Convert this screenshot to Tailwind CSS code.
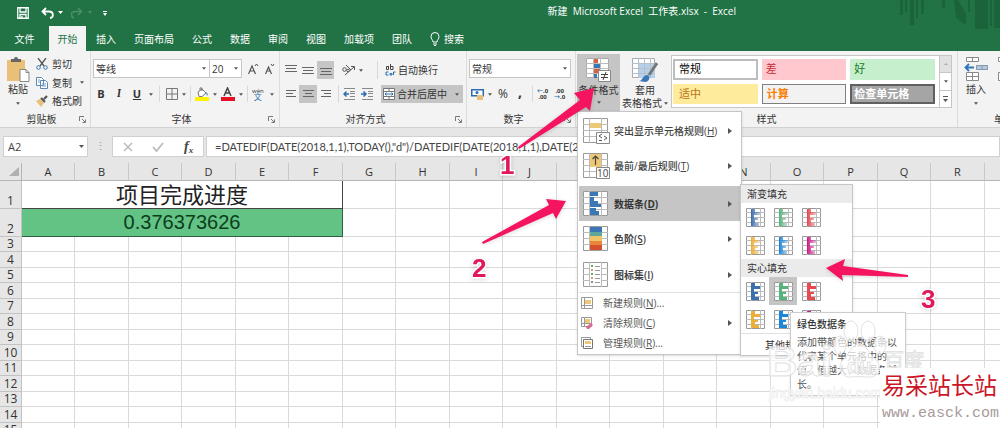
<!DOCTYPE html>
<html lang="zh-CN">
<head>
    <meta charset="UTF-8">
    <meta name="viewport" content="width=device-width, initial-scale=1.0">
    <title>新建 Microsoft Excel 工作表.xlsx - Excel</title>
    <script src="https://cdn.jsdelivr.net/npm/@tailwindcss/browser@4"></script>
</head>
<body class="relative min-h-screen overflow-hidden bg-white font-['Open_Sans','Noto_Sans_CJK_SC',sans-serif] text-[10px] leading-[14px] text-[#333]">

    <!-- Shared glyphs -->
    <svg class="hidden">
        <symbol id="caret" viewBox="0 0 5 3"><path d="M0 0h5L2.500 3z" fill="#555"/></symbol>
        <symbol id="launcher" viewBox="0 0 7 7"><path d="M.5 5V.5H5M3 3l3 3M6.500 3.500v3h-3" fill="none" stroke="#777"/></symbol>
        <symbol id="arrow" viewBox="0 0 4 6"><path d="M0 0l4 3-4 3z" fill="#555"/></symbol>
        <symbol id="sheet" viewBox="0 0 25 25"><path d="M.5.5h24v24H.5z" fill="#fff" stroke="#999"/><path d="M6.500 0v25M18.500 0v25M0 6.500h25M0 12.500h25M0 18.500h25" fill="none" stroke="#bbb"/></symbol>
    </svg>

    <!-- Title bar and tabs -->
    <header class="relative bg-[#217346] text-white">
        <svg class="absolute right-0 top-0 h-8 w-[104px]" viewBox="0 0 104 32" fill="#1b633b">
            <path d="M4 0h3v15H4zM9 0h2v12H9zM14 0h4v25h-4zM20 0h2v18h-2zM25 0h3v14h-3zM46 0h3v8h-3zM58 0h4l8 14v11L60 18zM72 0h2v12h-2zM79 0h13v29H79zM94 0h2v26h-2zM98 0h6v28h-6z"/>
        </svg>
        <div class="flex h-[26px] items-center">
            <div class="flex flex-1 items-center pl-[17px]">
                <button aria-label="保存"><svg class="h-3 w-3" viewBox="0 0 12 12"><path d="M.75.75h10.500v10.500H.75zM3 1v4h6V1M3 11V7.500h6V11M5 9v2" fill="none" stroke="#fff" stroke-width="1.300"/></svg></button>
                <button aria-label="撤消" class="ml-3"><svg class="h-3 w-[22px]" viewBox="0 0 22 12"><path d="M5 1L1.500 4.500 5 8M2 4.500h6c5 0 5 6 1 6.500" fill="none" stroke="#fff" stroke-width="1.800"/><path d="M17 4h5l-2.500 3z" fill="#fff"/></svg></button>
                <button aria-label="恢复" class="ml-2"><svg class="h-3 w-[22px]" viewBox="0 0 22 12"><path d="M7 1l3.500 3.500L7 8M10 4.500H4C-1 4.500 0 10.500 3 11" fill="none" stroke="#4b8f6a" stroke-width="1.600"/><path d="M17 4h4l-2 3z" fill="#4b8f6a"/></svg></button>
                <button aria-label="自定义快速访问工具栏" class="ml-2.5"><svg class="h-[5px] w-1" viewBox="0 0 4 5"><path d="M0 0h4v1H0zM0 2h4L2 5z" fill="#fff"/></svg></button>
            </div>
            <h1 class="mr-[264px] whitespace-pre pb-1 text-[10px]">新建  Microsoft Excel  工作表.xlsx  -  Excel</h1>
        </div>
        <nav class="flex h-[25px] items-stretch">
            <a href="#" class="flex w-[49px] items-center justify-center">文件</a>
            <a href="#" class="flex w-[37px] items-center justify-center bg-[#f3f3f3] text-[#217346]">开始</a>
            <a href="#" class="flex w-10 items-center justify-center">插入</a>
            <a href="#" class="flex w-14 items-center justify-center">页面布局</a>
            <a href="#" class="flex w-10 items-center justify-center">公式</a>
            <a href="#" class="flex w-9 items-center justify-center">数据</a>
            <a href="#" class="flex w-10 items-center justify-center">审阅</a>
            <a href="#" class="flex w-9 items-center justify-center">视图</a>
            <a href="#" class="flex w-[50px] items-center justify-center">加载项</a>
            <a href="#" class="flex w-9 items-center justify-center">团队</a>
            <a href="#" class="ml-2.5 flex items-center gap-1">
                <svg class="h-[14px] w-[10px]" viewBox="0 0 10 14" fill="none" stroke="#fff"><path d="M3 10C3 8 1 7 1 4.500a4 4 0 018 0C9 7 7 8 7 10zM3 12h4M4 13.500h2"/></svg>搜索
            </a>
        </nav>
    </header>

    <!-- Ribbon -->
    <section class="flex h-[77px] border-b border-[#d2d2d2] bg-[#f3f3f3]">
        <!-- Clipboard -->
        <div class="flex w-[91px] shrink-0 flex-col border-r border-[#dcdcdc]">
            <div class="flex flex-1 pl-1 pt-1.5">
                <button class="flex w-7 flex-col items-center">
                    <svg class="h-[25px] w-6" viewBox="0 0 24 25"><path d="M1 3h18v21H1z" fill="#eabf77"/><path d="M5 5V2h3a2 2 0 014 0h3v3z" fill="#666"/><path d="M14 12.500h6l3 3v9h-9z" fill="#fff" stroke="#888"/><path d="M20 12.500v3h3" fill="none" stroke="#888"/></svg>
                    <span>粘贴</span>
                    <svg class="mt-1.5 h-[3px] w-1"><use href="#caret"/></svg>
                </button>
                <div class="ml-1 flex flex-col gap-1">
                    <button class="flex h-[14px] items-center gap-1">
                        <svg class="h-3 w-3" viewBox="0 0 12 12" fill="none"><path d="M2 0l6 8M10 0L4 8" stroke="#555" stroke-width="1.300"/><circle cx="2.500" cy="9.500" r="1.800" stroke="#3b76b5"/><circle cx="9.500" cy="9.500" r="1.800" stroke="#3b76b5"/></svg>剪切
                    </button>
                    <button class="flex h-[15px] items-center gap-1">
                        <svg class="h-3 w-3" viewBox="0 0 12 12"><path d="M.5.5h5l2 2v6h-7zM4.500 3.500h5l2 2v6h-7z" fill="#fff" stroke="#5d88b3"/><path d="M6 7h4M6 9h4M2 3h2M2 5h2" stroke="#7ba3cb"/></svg>复制
                        <svg class="ml-1 h-[3px] w-1"><use href="#caret"/></svg>
                    </button>
                    <button class="flex h-[14px] items-center gap-1">
                        <svg class="h-3 w-3" viewBox="0 0 12 12"><path d="M0 6l4-2 4 4-3 4z" fill="#eabf77"/><path d="M5 3l4 4M8 4l3-3" stroke="#555" stroke-width="2.200"/></svg>格式刷
                    </button>
                </div>
            </div>
            <div class="flex h-4 items-center px-1"><span class="flex-1 text-center">剪贴板</span><svg class="h-[7px] w-[7px]"><use href="#launcher"/></svg></div>
        </div>

        <!-- Font -->
        <div class="flex w-[189px] shrink-0 flex-col border-r border-[#dcdcdc]">
            <div class="flex flex-1 flex-col gap-2 pl-0.5 pt-2">
                <div class="flex items-center">
                    <div class="relative"><select aria-label="字体" class="h-[19px] w-[117px] appearance-none border border-[#c6c6c6] bg-white pl-0.5"><option>等线</option></select><svg class="absolute right-1 top-2 h-[3px] w-1"><use href="#caret"/></svg></div>
                    <div class="relative"><select aria-label="字号" class="h-[19px] w-8 appearance-none border border-l-0 border-[#c6c6c6] bg-white pl-0.5"><option>20</option></select><svg class="absolute right-1 top-2 h-[3px] w-1"><use href="#caret"/></svg></div>
                    <button aria-label="增大字号" class="ml-1.5"><svg class="h-3 w-[11px]" viewBox="0 0 11 12" fill="none" stroke="#555"><path d="M.5 11L4 3l3.500 8M2 8h4" stroke-width="1.200"/><path d="M7 3l1.500-2L10 3"/></svg></button>
                    <button aria-label="减小字号" class="ml-1.5"><svg class="h-3 w-[10px]" viewBox="0 0 10 12" fill="none" stroke="#555"><path d="M.5 11l3-7 3 7M2 8h3" stroke-width="1.200"/><path d="M6 1l1.500 2L9 1"/></svg></button>
                </div>
                <div class="flex h-4 items-center">
                    <button class="w-4 text-[11px] font-bold">B</button>
                    <button class="w-5 font-serif text-[11px] font-bold italic">I</button>
                    <button class="w-4 text-[11px] font-bold underline">U</button>
                    <svg class="ml-1 h-[3px] w-1"><use href="#caret"/></svg>
                    <span class="mx-1.5 h-4 border-l border-[#d8d8d8]"></span>
                    <button aria-label="边框"><svg class="h-3 w-3" viewBox="0 0 12 12"><path d="M.5.5h11v11H.5zM6 0v12M0 6h12" fill="none" stroke="#777"/></svg></button>
                    <svg class="ml-1 h-[3px] w-1"><use href="#caret"/></svg>
                    <span class="mx-1 h-4 border-l border-[#d8d8d8]"></span>
                    <button aria-label="填充颜色"><svg class="h-[14px] w-[14px]" viewBox="0 0 14 14"><path d="M0 10h14v4H0z" fill="#fff200"/><path d="M3 5l4-3 4 4-4 3.500H4z" fill="#fff" stroke="#777"/><path d="M5 4V1h2v3" fill="none" stroke="#777"/><path d="M11 5c2 1 2 3 1 4z" fill="#3b76b5"/></svg></button>
                    <svg class="ml-1 h-[3px] w-1"><use href="#caret"/></svg>
                    <button aria-label="字体颜色" class="ml-1"><svg class="h-[14px] w-[14px]" viewBox="0 0 14 14"><path d="M0 10h14v4H0z" fill="#e81123"/><path d="M3 9l3.500-8L10 9M4.500 6h4" fill="none" stroke="#444" stroke-width="1.500"/></svg></button>
                    <svg class="ml-1 h-[3px] w-1"><use href="#caret"/></svg>
                    <span class="mx-1 h-4 border-l border-[#d8d8d8]"></span>
                    <button class="flex flex-col items-center text-[8px] leading-[6px]"><span class="text-[6px]">wén</span><span class="text-[#2b6cb0]">文</span></button>
                    <svg class="ml-1.5 h-[3px] w-1"><use href="#caret"/></svg>
                </div>
            </div>
            <div class="flex h-4 items-center px-1"><span class="flex-1 text-center">字体</span><svg class="h-[7px] w-[7px]"><use href="#launcher"/></svg></div>
        </div>

        <!-- Alignment -->
        <div class="flex w-[187px] shrink-0 flex-col border-r border-[#dcdcdc]">
            <div class="flex flex-1 flex-col gap-1.5 pl-0.5 pt-2.5">
                <div class="flex h-[18px] items-center">
                    <button aria-label="顶端对齐" class="flex h-[18px] w-[17px] items-center justify-center"><svg class="h-3 w-3" viewBox="0 0 12 12" stroke="#666"><path d="M0 1.500h12M1 4.500h10M0 7.500h12"/></svg></button>
                    <button aria-label="垂直居中" class="flex h-[18px] w-[18px] items-center justify-center"><svg class="h-3 w-3" viewBox="0 0 12 12" stroke="#666"><path d="M0 3.500h12M1 6.500h10M0 9.500h12"/></svg></button>
                    <button aria-label="底端对齐" class="flex h-[18px] w-[17px] items-center justify-center bg-[#c5c5c5]"><svg class="h-3 w-3" viewBox="0 0 12 12" stroke="#666"><path d="M0 4.500h12M1 7.500h10M0 10.500h12"/></svg></button>
                    <button aria-label="方向" class="ml-2 flex items-center gap-1"><svg class="h-3 w-[13px]" viewBox="0 0 13 12" fill="none" stroke="#555"><path d="M3 11l9-8M9 2.500h3.500V6"/><circle cx="2.500" cy="5.500" r="1.800"/><path d="M4 1l5 5"/><circle cx="6" cy="6.500" r="1.300"/></svg><svg class="h-[3px] w-1"><use href="#caret"/></svg></button>
                    <span class="ml-3.5 h-[18px] border-l border-[#d8d8d8]"></span>
                    <button class="ml-1.5 flex items-center gap-0.5">
                        <svg class="h-3 w-3" viewBox="0 0 11 12" fill="none"><path d="M4 2.500H2v3h2V2M6 0v5.500h2.500v-3H6" stroke="#444"/><path d="M4 8H1.500v3H4M5.500 9.500h2V11h-2zM9 11V8h2" stroke="#2b6cb0"/></svg>自动换行
                    </button>
                </div>
                <div class="flex h-[18px] items-center">
                    <button aria-label="左对齐" class="flex h-[18px] w-[17px] items-center justify-center"><svg class="h-3 w-[10px]" viewBox="0 0 10 12" stroke="#666"><path d="M0 2.500h10M0 5.500h7M0 8.500h10"/></svg></button>
                    <button aria-label="居中" class="flex h-[18px] w-[18px] items-center justify-center bg-[#c5c5c5]"><svg class="h-3 w-[11px]" viewBox="0 0 11 12" stroke="#666"><path d="M0 2.500h11M2 5.500h7M0 8.500h11"/></svg></button>
                    <button aria-label="右对齐" class="flex h-[18px] w-[17px] items-center justify-center"><svg class="h-3 w-[10px]" viewBox="0 0 10 12" stroke="#666"><path d="M0 2.500h10M3 5.500h7M0 8.500h10"/></svg></button>
                    <span class="mx-1 h-[18px] border-l border-[#d8d8d8]"></span>
                    <button aria-label="减少缩进量"><svg class="h-3 w-3" viewBox="0 0 12 12"><path d="M1 .5h11M7 3.500h5M7 5.500h5M7 8.500h5M1 11.500h11" stroke="#888"/><path d="M6 6H1M3.500 3.500L1 6l2.500 2.500" fill="none" stroke="#2b6cb0" stroke-width="1.500"/></svg></button>
                    <button aria-label="增加缩进量" class="ml-1.5"><svg class="h-3 w-3" viewBox="0 0 12 12"><path d="M1 .5h11M7 3.500h5M7 5.500h5M7 8.500h5M1 11.500h11" stroke="#888"/><path d="M0 6h5M2.500 3.500L5 6 2.500 8.500" fill="none" stroke="#2b6cb0" stroke-width="1.500"/></svg></button>
                    <button class="ml-2 flex h-[18px] items-center gap-0.5 bg-[#c5c5c5] pl-0.5 pr-1">
                        <svg class="h-3 w-3" viewBox="0 0 12 12"><path d="M.5.5h11v11H.5z" fill="#fff" stroke="#777"/><path d="M0 3.500h12M0 8.500h12M6 0v3M6 9v3" stroke="#777"/><path d="M2 6h8M3.500 4.500L2 6l1.500 1.500M8.500 4.500L10 6 8.500 7.500" fill="none" stroke="#2b6cb0"/></svg>合并后居中
                        <svg class="ml-1.5 h-[3px] w-1"><use href="#caret"/></svg>
                    </button>
                </div>
            </div>
            <div class="flex h-4 items-center px-1"><span class="flex-1 pr-2 text-center">对齐方式</span><svg class="h-[7px] w-[7px]"><use href="#launcher"/></svg></div>
        </div>

        <!-- Number -->
        <div class="flex w-[109px] shrink-0 flex-col border-r border-[#dcdcdc]">
            <div class="flex flex-1 flex-col gap-2 pl-0.5 pt-2">
                <div class="relative w-[102px]"><select aria-label="数字格式" class="h-[19px] w-full appearance-none border border-[#c6c6c6] bg-white pl-0.5"><option>常规</option></select><svg class="absolute right-1 top-2 h-[3px] w-1"><use href="#caret"/></svg></div>
                <div class="flex h-4 items-center pl-0.5">
                    <button aria-label="会计数字格式"><svg class="h-3 w-[13px]" viewBox="0 0 13 12"><path d="M.75 1.750h11.500v6H.75z" fill="#fff" stroke="#2b6cb0" stroke-width="1.500"/><circle cx="6" cy="4.500" r="1.500" fill="#2b6cb0"/><path d="M6 7h6v5H6z" fill="#eabf77"/></svg></button>
                    <svg class="ml-1 h-[3px] w-1"><use href="#caret"/></svg>
                    <button class="ml-1.5 text-[12px]">%</button>
                    <button class="ml-2.5 pb-1 text-[14px] font-bold">,</button>
                    <span class="ml-2.5 h-4 border-l border-[#d8d8d8]"></span>
                    <button class="ml-1 text-[6px] font-bold leading-[6px]"><span class="text-[#2b6cb0]">←</span>.0<br>.00</button>
                    <button class="ml-1.5 text-[6px] font-bold leading-[6px]">.00<br><span class="text-[#2b6cb0]">→</span>.0</button>
                </div>
            </div>
            <div class="flex h-4 items-center px-1"><span class="flex-1 pr-2 text-center">数字</span><svg class="h-[7px] w-[7px]"><use href="#launcher"/></svg></div>
        </div>

        <!-- Styles -->
        <div class="flex w-[382px] shrink-0 flex-col border-r border-[#dcdcdc]">
            <div class="flex flex-1 pl-px pt-[3px]">
                <div class="relative w-[43px]">
                    <button class="flex h-[57px] w-full flex-col items-center bg-[#c5c5c5] pt-1">
                        <svg class="h-[25px] w-[25px]" viewBox="0 0 25 25"><path d="M.5.5h22v19H.5z" fill="#fff" stroke="#aaa"/><path d="M7.500 0v20M14.500 0v20M0 5.500h22M0 10.500h22M0 15.500h22" stroke="#bbb"/><path d="M8 1h4v4H8zM8 11h6v4H8z" fill="#d9603b"/><path d="M8 6h6v4H8zM8 16h3v4H8z" fill="#3c77b5"/><path d="M12.500 12.500h12v11h-12z" fill="#fff" stroke="#888"/><path d="M15 16.500h7M15 19.500h7M20 14l-3 8" stroke="#444"/></svg>
                        <span class="whitespace-nowrap">条件格式</span>
                        <svg class="mt-1 h-[3px] w-1"><use href="#caret"/></svg>
                    </button>

                    <!-- Conditional formatting menu -->
                    <div class="absolute left-0 top-[57px] z-10 w-[165px] border border-[#c6c6c6] bg-white p-px shadow-sm">
                        <ul class="font-medium text-[#444]">
                            <li><button class="flex h-[35px] w-full items-center pl-1 pr-2">
                                <svg class="h-[26px] w-[27px]" viewBox="0 0 27 26"><use href="#sheet" width="25" height="25"/><path d="M7 5h11v5H7z" fill="#eec877"/><path d="M13.500 14.500h13v11h-13z" fill="#fff" stroke="#888"/><path d="M19 16l-3 2 3 2M16 22.500h3M21 18l3 2-3 2" fill="none" stroke="#555"/></svg>
                                <span class="ml-1 flex-1 text-left">突出显示单元格规则(<u>H</u>)</span><svg class="h-[6px] w-1"><use href="#arrow"/></svg></button></li>
                            <li><button class="flex h-[36px] w-full items-center pl-1 pr-2">
                                <svg class="h-[26px] w-[27px]" viewBox="0 0 27 26"><use href="#sheet" width="25" height="25"/><path d="M7 1h11v13H7z" fill="#eec877"/><path d="M12.500 12V3M9.500 6l3-3 3 3" fill="none" stroke="#444" stroke-width="1.200"/><path d="M13.500 14.500h13v11h-13z" fill="#fff" stroke="#888"/><text x="14" y="24" font-size="10" fill="#444">10</text></svg>
                                <span class="ml-1 flex-1 text-left">最前/最后规则(<u>T</u>)</span><svg class="h-[6px] w-1"><use href="#arrow"/></svg></button></li>
                            <li><button class="mt-0.5 flex h-[35px] w-full items-center bg-[#c5c5c5] pl-1 pr-2 font-bold text-[#333]">
                                <svg class="h-[26px] w-[27px]" viewBox="0 0 27 26"><use href="#sheet" width="25" height="25"/><path d="M7 1h8v4H7zM7 6h4v4H7zM7 10h8v3H7zM7 13h11v3H7zM7 17h6v3H7zM7 20h9v4H7z" fill="#3c77b5"/></svg>
                                <span class="ml-1 flex-1 text-left">数据条(<u>D</u>)</span><svg class="h-[6px] w-1"><use href="#arrow"/></svg></button></li>
                            <li><button class="flex h-[36px] w-full items-center pl-1 pr-2">
                                <svg class="h-[26px] w-[27px]" viewBox="0 0 27 26"><use href="#sheet" width="25" height="25"/><path d="M7 1h12v5H7z" fill="#3c77b5"/><path d="M7 6h12v4H7z" fill="#5fa79d"/><path d="M7 10h12v5H7z" fill="#edc568"/><path d="M7 15h12v4H7z" fill="#e8863c"/><path d="M7 19h12v5H7z" fill="#d5502c"/></svg>
                                <span class="ml-1 flex-1 text-left font-semibold">色阶(<u>S</u>)</span><svg class="h-[6px] w-1"><use href="#arrow"/></svg></button></li>
                            <li><button class="flex h-[35px] w-full items-center pl-1 pr-2">
                                <svg class="h-[26px] w-[27px]" viewBox="0 0 27 26"><use href="#sheet" width="25" height="25"/><path d="M7 1h11v23H7z" fill="#fff"/><path d="M8 3h2v2H8zM8 11h2v2H8zM8 19h2v2H8z" fill="#7c9a6a"/><path d="M8 7h2v2H8zM8 15h2v2H8z" fill="#d8a35a"/><path d="M12 4.500h5M12 8.500h5M12 12.500h5M12 16.500h5M12 20.500h5" stroke="#999"/></svg>
                                <span class="ml-1 flex-1 text-left font-semibold">图标集(<u>I</u>)</span><svg class="h-[6px] w-1"><use href="#arrow"/></svg></button></li>
                        </ul>
                        <ul class="border-t border-[#e1e1e1] text-[#555]">
                            <li><button class="flex h-5 w-full items-center pl-0.5 pr-2">
                                <svg class="h-3 w-3" viewBox="0 0 12 12"><path d="M.5.5h11v11H.5zM3.500 0v12M0 8.500h12" fill="#fff" stroke="#999"/><path d="M4 3h6v4H4z" fill="#eec877"/></svg>
                                <span class="ml-2.5 flex-1 text-left">新建规则(<u>N</u>)...</span></button></li>
                            <li><button class="flex h-5 w-full items-center pl-0.5 pr-2">
                                <svg class="h-3 w-3" viewBox="0 0 12 12"><path d="M.5.5h10v9H.5zM3.500 0v10M0 6.500h11" fill="#fff" stroke="#999"/><path d="M4 2h5v4H4z" fill="#eec877"/><path d="M5 10l5-4 2 2-4 4H6z" fill="#dd6a8d"/></svg>
                                <span class="ml-2.5 flex-1 text-left">清除规则(<u>C</u>)</span><svg class="h-[6px] w-1"><use href="#arrow"/></svg></button></li>
                            <li><button class="flex h-5 w-full items-center pl-0.5 pr-2">
                                <svg class="h-3 w-3" viewBox="0 0 12 12"><path d="M.5.500h9v9h-9z" fill="#fff" stroke="#999"/><path d="M2.500 2.500h9v9h-9z" fill="#fff" stroke="#777"/><path d="M4 4h6v3H4z" fill="#eec877"/><path d="M4 9.500h6" stroke="#999"/></svg>
                                <span class="ml-2.5 flex-1 text-left">管理规则(<u>R</u>)...</span></button></li>
                        </ul>

                        <!-- Data bar submenu -->
                        <div class="absolute left-[162px] top-[72px] w-[113px] border border-[#c6c6c6] bg-white shadow-sm">
                            <h2 class="h-[18px] bg-[#ebebeb] pl-1.5 leading-[18px]">渐变填充</h2>
                            <div id="gradientFills" class="grid w-[84px] grid-cols-3"></div>
                            <h2 class="h-[18px] bg-[#ebebeb] pl-1.5 leading-[18px]">实心填充</h2>
                            <div id="solidFills" class="grid w-[84px] grid-cols-3"></div>
                            <button class="h-[22px] w-full whitespace-nowrap border-t border-[#e1e1e1] pl-6 text-left">其他规则(<u>M</u>)...</button>

                            <!-- Tooltip -->
                            <div role="tooltip" class="absolute left-[49px] top-[127px] w-[116px] border border-[#ccc] bg-white px-1.5 py-1 leading-[14px] text-[#555] shadow-sm">
                                <p class="font-medium text-[#333]">绿色数据条</p>
                                <p class="mt-1">添加带颜色的数据条以代表某个单元格中的值。值越大，数据条越长。</p>
                            </div>
                        </div>
                    </div>
                </div>
                <button class="flex w-[50px] flex-col items-center pt-1">
                    <svg class="h-[25px] w-[26px]" viewBox="0 0 26 25"><path d="M.5.5h22v19H.5z" fill="#fff" stroke="#aaa"/><path d="M6 6h17v14H6z" fill="#b7d0ea"/><path d="M6.500 0v20M12.500 0v20M18.500 0v20M0 5.500h23M0 10.500h23M0 15.500h23" stroke="#b5bfc9"/><path d="M25 5l-8 12" stroke="#777" stroke-width="3"/><path d="M7 23c4 0 3-6 9-6 3 2 1 7-3 7z" fill="#3c77b5"/></svg>
                    <span class="leading-[14px]">套用</span>
                    <span class="flex items-center gap-0.5 whitespace-nowrap leading-[13px]">表格格式<svg class="h-[3px] w-1"><use href="#caret"/></svg></span>
                </button>
                <div class="ml-px mt-px flex h-[53px] w-[281px] border border-[#c6c6c6] bg-white text-[11px]">
                    <div class="grid flex-1 grid-cols-3 gap-x-1 gap-y-1 py-[3px] pl-px pr-1">
                        <button class="border-2 border-[#bdbdbd] bg-white pl-1 text-left text-black">常规</button>
                        <button class="bg-[#ffc7ce] pl-1 text-left text-[#c0303a]">差</button>
                        <button class="bg-[#c6efce] pl-1 text-left text-[#1d7a1d]">好</button>
                        <button class="bg-[#ffeb9c] pl-1.5 text-left text-[#b8741a]">适中</button>
                        <button class="border border-[#7f7f7f] bg-[#f2f2f2] pl-1 text-left font-bold text-[#fa7d00]">计算</button>
                        <button class="border-2 border-[#606060] bg-[#a5a5a5] pl-0.5 text-left font-bold text-white">检查单元格</button>
                    </div>
                    <div class="flex w-3 flex-col divide-y divide-[#c6c6c6] border-l border-[#c6c6c6]">
                        <button aria-label="上一行" class="flex flex-1 items-center justify-center bg-[#e1e1e1]"><svg class="h-0.5 w-1"><path d="M0 2l2-2 2 2z" fill="#aaa"/></svg></button>
                        <button aria-label="下一行" class="flex flex-1 items-center justify-center"><svg class="h-[3px] w-1"><use href="#caret"/></svg></button>
                        <button aria-label="其他" class="flex flex-1 items-center justify-center"><svg class="h-[6px] w-[5px]" viewBox="0 0 5 6"><path d="M0 0h5v1H0zM0 3h5L2.500 6z" fill="#555"/></svg></button>
                    </div>
                </div>
            </div>
            <div class="flex h-4 items-center justify-center">样式</div>
        </div>

        <!-- Cells -->
        <div class="flex w-[82px] shrink-0 flex-col">
            <div class="flex flex-1 gap-2 pl-1.5 pt-1.5">
                <button class="flex w-6 flex-col items-center">
                    <svg class="h-[25px] w-6" viewBox="0 0 24 25"><path d="M2.500.5h12v4h-12zM8.500 0v5M2.500 15.500h12v8h-12zM8.500 15v9M2 19.500h13" fill="#fff" stroke="#888"/><path d="M12.500 8.500h11v4h-11zM18 8v5" fill="#b7c9dc" stroke="#8398ad"/><path d="M10 10.500H1M5 7l-3.500 3.500L5 14" fill="none" stroke="#2f75b8" stroke-width="1.800"/></svg>
                    <span>插入</span>
                    <svg class="mt-1.5 h-[3px] w-1"><use href="#caret"/></svg>
                </button>
                <button aria-label="删除" class="flex w-6 flex-col items-center">
                    <svg class="h-[25px] w-6" viewBox="0 0 24 25"><path d="M2.500.5h12v4h-12zM2.500 15.500h12v8h-12z" fill="#fff" stroke="#888"/></svg>
                </button>
            </div>
            <div class="flex h-4 items-center pl-9">单元格</div>
        </div>
    </section>

    <!-- Formula bar -->
    <section class="flex h-[35px] items-start bg-[#e6e6e6] pl-[3px] pt-2 text-[11px] text-[#444]">
        <div class="relative"><input aria-label="名称框" value="A2" class="h-[21px] w-[85px] border border-[#d0d0d0] bg-white pl-1"><svg class="absolute right-1 top-[9px] h-[3px] w-[5px]"><use href="#caret"/></svg></div>
        <span class="w-[24px] text-center leading-[20px] text-[#999]">⋮</span>
        <div class="flex h-[21px] w-[92px] items-center justify-around border border-[#d0d0d0] bg-white">
            <button aria-label="取消"><svg class="h-[10px] w-[10px]" viewBox="0 0 10 10"><path d="M1 1l8 8M9 1L1 9" stroke="#bbb" stroke-width="1.500"/></svg></button>
            <button aria-label="输入"><svg class="h-[10px] w-3" viewBox="0 0 12 10"><path d="M1 5l3.500 4L11 1" fill="none" stroke="#bbb" stroke-width="1.800"/></svg></button>
            <button class="font-['Liberation_Serif',serif] text-[14px] font-bold italic">f<sub class="text-[9px]">x</sub></button>
        </div>
        <input aria-label="编辑栏" value="=DATEDIF(DATE(2018,1,1),TODAY(),&quot;d&quot;)/DATEDIF(DATE(2018,1,1),DATE(2019,1,1),&quot;d&quot;)" class="ml-0.5 h-[21px] min-w-0 flex-1 border border-[#d0d0d0] bg-white pl-2 font-['Lato',sans-serif]">
    </section>

    <!-- Worksheet -->
    <table class="w-[1038px] table-fixed border-separate border-spacing-0">
        <colgroup id="columns"><col class="w-[22px]"></colgroup>
        <thead><tr id="columnHeads" class="h-[18px] bg-[#e6e6e6] text-[11px]"></tr></thead>
        <tbody id="rows"></tbody>
    </table>

    <!-- Watermarks -->
    <svg class="pointer-events-none absolute left-[760px] top-[300px] z-20 h-[110px] w-[170px]" viewBox="0 0 170 110" fill="#fff" fill-opacity=".7" stroke="#e2e2e2" font-family="Liberation Sans, Noto Sans CJK SC, sans-serif" font-weight="bold">
        <text x="7" y="76" font-size="42">Bai</text>
        <ellipse cx="80" cy="45" rx="6" ry="9"/><ellipse cx="91" cy="31" rx="7" ry="10"/><ellipse cx="108" cy="31" rx="7" ry="10"/><ellipse cx="120" cy="45" rx="6" ry="9"/>
        <path d="M99 44c8 0 10 11 17 16 7 8 2 17-6 17-6 0-14-1-20 0-10 0-13-10-7-17 7-6 8-16 16-16z"/>
        <text x="87" y="73" font-size="20">du</text>
        <text x="124" y="68" font-size="20" font-weight="normal">百度</text>
        <text x="9" y="98" font-size="14" font-weight="normal" stroke="#f2f2f2">jingyan.baidu.com</text>
    </svg>
    <div class="absolute left-[880px] top-[368px] z-20 w-[120px] bg-white pb-1.5 pl-0.5">
        <p class="whitespace-nowrap font-['Liberation_Serif','Noto_Sans_CJK_SC',serif] text-[23px] leading-[38px] text-[#cc1628]">易采站长站</p>
        <p class="font-['Liberation_Mono',monospace] text-[15px] leading-[16px] text-[#a89a9a]">www.easck.com</p>
    </div>

    <!-- Step arrows -->
    <svg class="pointer-events-none absolute left-0 top-0 z-30 h-[428px] w-[1000px] drop-shadow-sm" viewBox="0 0 1000 428" fill="#f5145f">
        <path d="M594 88l-20 5 6 7-62 47 1 2 67-42 4 4z"/>
        <path d="M566 201l-20-2 3 6-67 37 1 2 70-31 3 6z"/>
        <path d="M826 268l19-9-2 7 65 9v2l-66-2 1 6z"/>
        <g font-family="Liberation Sans, Arial, sans-serif" font-size="26" font-weight="bold" fill="#e0185c" stroke="#fff" stroke-width="3" paint-order="stroke">
            <text x="500" y="174">1</text>
            <text x="472" y="277">2</text>
            <text x="921" y="308">3</text>
        </g>
    </svg>

    <script>
        const letters = 'ABCDEFGHIJKLMNOPQR'.split('').concat('');
        const columns = document.getElementById('columns');
        const heads = document.getElementById('columnHeads');
        const rows = document.getElementById('rows');

        // Column headings
        heads.innerHTML = `<th class="border-b border-r border-[#b5b5b5] p-0"><svg class="ml-auto mr-0.5 h-[9px] w-[10px]" viewBox="0 0 10 9"><path d="M10 0v9H0z" fill="#b0b0b0"/></svg></th>`;
        letters.forEach((letter, i) => {
            columns.innerHTML += i % 2 ? '<col class="w-[54px]">' : '<col class="w-[53px]">';
            heads.innerHTML += `<th class="border-b border-r border-b-[#b5b5b5] border-r-[#c8c8c8] p-0 font-normal">${letter}</th>`;
        });

        // Rows, with A:F merged in the first two
        for (let n = 1; n <= 15; n++) {
            const row = document.createElement('tr');
            row.className = n <= 2 ? 'h-[28px]' : n % 2 ? 'h-[15px]' : 'h-[16px]';
            row.innerHTML = `<th class="border-b border-r border-[#c3c3c3] bg-[#e6e6e6] p-0 align-bottom text-[12px] font-normal">${n}</th>`;
            if (n === 1) {
                row.innerHTML += `<td colspan="6" class="border-b border-r border-[#444] p-0 text-center text-[22px] leading-[27px] text-[#222]">项目完成进度</td>`;
            } else if (n === 2) {
                row.innerHTML += `<td colspan="6" class="border-b border-r border-[#2f5f45] bg-[#63c384] p-0 text-center font-['Liberation_Sans',sans-serif] text-[20px] leading-[27px] text-[#0c3d1d]">0.376373626</td>`;
            }
            for (let c = n <= 2 ? 6 : 0; c < letters.length; c++) {
                row.innerHTML += '<td class="border-b border-r border-[#dadada] p-0"></td>';
            }
            rows.appendChild(row);
        }

        // Data bar swatches
        const fills = [
            ['蓝色', '#3d6fae'], ['绿色', '#56b37c'], ['红色', '#e8484f'],
            ['橙色', '#eeae3a'], ['浅蓝色', '#1b86d8'], ['紫色', '#cc1a86']
        ];
        function swatches(id, gradient) {
            document.getElementById(id).innerHTML = fills.map(([name, color], i) => `
                <button aria-label="${name}数据条" class="${!gradient && i === 1 ? 'flex h-7 items-center justify-center bg-[#c5c5c5]' : 'flex h-7 items-center justify-center'}">
                    <svg class="h-[19px] w-[19px]" viewBox="0 0 19 19">
                        <defs><linearGradient id="${id}${i}"><stop offset="0" stop-color="${color}"/><stop offset="1" stop-color="${color}" stop-opacity="${gradient ? 0.3 : 1}"/></linearGradient></defs>
                        <path d="M.5.5h18v18H.5z" fill="#fff" stroke="#999"/>
                        <path d="M5.500 0v19M14.500 0v19M0 4.500h19M0 9.500h19M0 14.500h19" stroke="#bbb"/>
                        <path d="M5 1h4v3H5zM5 4h9v3H5zM5 7h3v3H5zM5 10h7v2H5zM5 12h4v3H5zM5 15h8v3H5z" fill="url(#${id}${i})"/>
                        <path d="M5.500 1v17" stroke="${color}"/>
                    </svg>
                </button>`).join('');
        }
        swatches('gradientFills', true);
        swatches('solidFills', false);
    </script>
</body>
</html>
